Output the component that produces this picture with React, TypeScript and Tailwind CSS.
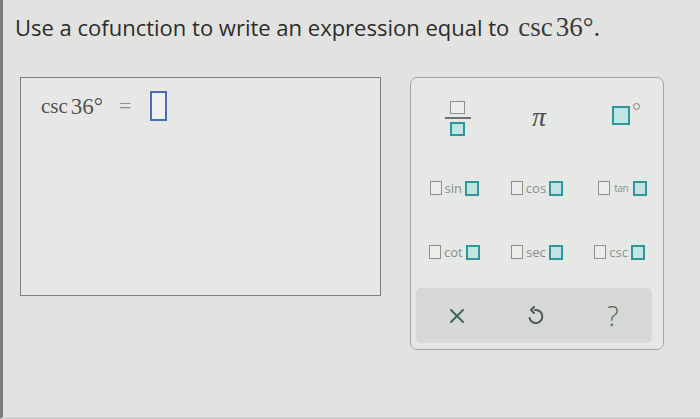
import React from "react";

const GrayBox = ({ w = 12, h = 14 }: { w?: number; h?: number }) => (
  <span
    className="inline-block border-[1.5px] border-[#8c918f] bg-[#eceeec]"
    style={{ width: w, height: h }}
  />
);

const TealBox = ({ w = 14, h = 15 }: { w?: number; h?: number }) => (
  <span
    className="inline-block border-2 border-[#2e979c] bg-[#c3e4e4]"
    style={{ width: w, height: h }}
  />
);

const Trig = ({ name, small }: { name: string; small?: boolean }) => (
  <div className="flex items-center justify-center">
    <GrayBox />
    <span
      className={
        small
          ? "ml-[4px] mr-[5px] text-[10px] leading-none text-[#8a8f8d] font-['Open_Sans',sans-serif] tracking-[-0.5px]"
          : "mx-[3px] text-[13px] leading-none text-[#8a8f8d] font-['Open_Sans',sans-serif]"
      }
    >
      {name}
    </span>
    <TealBox />
  </div>
);

export default function App() {
  return (
    <div className="w-[700px] h-[419px] overflow-hidden bg-[#e2e3e0] border-l-[3px] border-l-[#7b7d7b] border-b-[2px] border-b-[#cfd0ce]">
      <div className="pl-[12px] pt-[12px] h-[40px] flex items-baseline text-[#2b2d2c]">
        <span className="font-['Open_Sans',sans-serif] text-[22px] leading-[30px]">
          Use a cofunction to write an expression equal to
        </span>
        <span className="ml-[9px] font-['Liberation_Serif',serif] text-[27px] leading-[30px] text-[#3a3c3b]">
          csc<span className="ml-[3px]">36°.</span>
        </span>
      </div>

      <div className="mt-[37px] flex items-start">
        <div className="ml-[17px] w-[361px] h-[219px] border-[1.5px] border-[#7d807e] bg-[#e7e8e6] pl-[20px] pt-[13px]">
          <div className="flex items-center font-['Liberation_Serif',serif] text-[#505352]">
            <span className="text-[21px] leading-none">csc</span>
            <span className="ml-[3px] text-[23px] leading-none">36°</span>
            <span className="ml-[16px] text-[22px] leading-none text-[#8a8e8c]">=</span>
            <span className="ml-[19px] w-[17px] h-[30px] border-2 border-[#4a6db8] bg-[#eef0f2]" />
          </div>
        </div>

        <div className="ml-[29px] w-[254px] h-[273px] rounded-[7px] border border-[#a3a6a4] bg-[#e6e8e5] flex flex-col">
          <div className="h-[78px] grid grid-cols-3 pl-[6px] pr-[2px] items-center">
            <div className="flex flex-col items-center gap-[3px] pt-[2px]">
              <GrayBox w={15} h={13} />
              <span className="w-[26px] h-[2px] bg-[#6d7170]" />
              <TealBox w={15} h={14} />
            </div>
            <div className="flex justify-center">
              <span className="font-['Liberation_Serif',serif] italic text-[28px] leading-none text-[#4c504f]">π</span>
            </div>
            <div className="flex justify-center pl-[12px]">
              <div className="flex items-start -mt-[4px]">
                <TealBox w={18} h={19} />
                <span className="ml-[3px] -mt-[3px] w-[7px] h-[7px] rounded-full border-[1.5px] border-[#7c807e]" />
              </div>
            </div>
          </div>

          <div className="h-[64px] grid grid-cols-3 pl-[2px] pr-[2px] items-center">
            <Trig name="sin" />
            <Trig name="cos" />
            <div className="pl-[6px]">
              <Trig name="tan" small />
            </div>
          </div>

          <div className="h-[64px] grid grid-cols-3 pl-[2px] pr-[2px] items-center">
            <Trig name="cot" />
            <Trig name="sec" />
            <Trig name="csc" />
          </div>

          <div className="mt-[4px] ml-[5px] mr-[11px] h-[55px] rounded-[5px] bg-[#d5d8d5] grid grid-cols-3 items-center pl-[2px]">
            <div className="flex justify-center">
              <svg width="20" height="20" viewBox="0 0 20 20">
                <path d="M4 4 L16 16 M16 4 L4 16" stroke="#3f6663" strokeWidth="2" strokeLinecap="round" />
              </svg>
            </div>
            <div className="flex justify-center pt-[2px]">
              <svg width="20" height="22" viewBox="0 0 20 22">
                <path
                  d="M10 4 H11 A6.5 6.5 0 1 1 4.5 12"
                  fill="none"
                  stroke="#4c5a58"
                  strokeWidth="2"
                  strokeLinecap="round"
                />
                <path d="M9 1 L6 4 L9 7" fill="none" stroke="#4c5a58" strokeWidth="2" strokeLinecap="round" strokeLinejoin="round" />
              </svg>
            </div>
            <div className="flex justify-center">
              <span className="font-['Open_Sans',sans-serif] text-[27px] leading-none text-[#5a5f5d] font-light">?</span>
            </div>
          </div>
        </div>
      </div>
    </div>
  );
}
